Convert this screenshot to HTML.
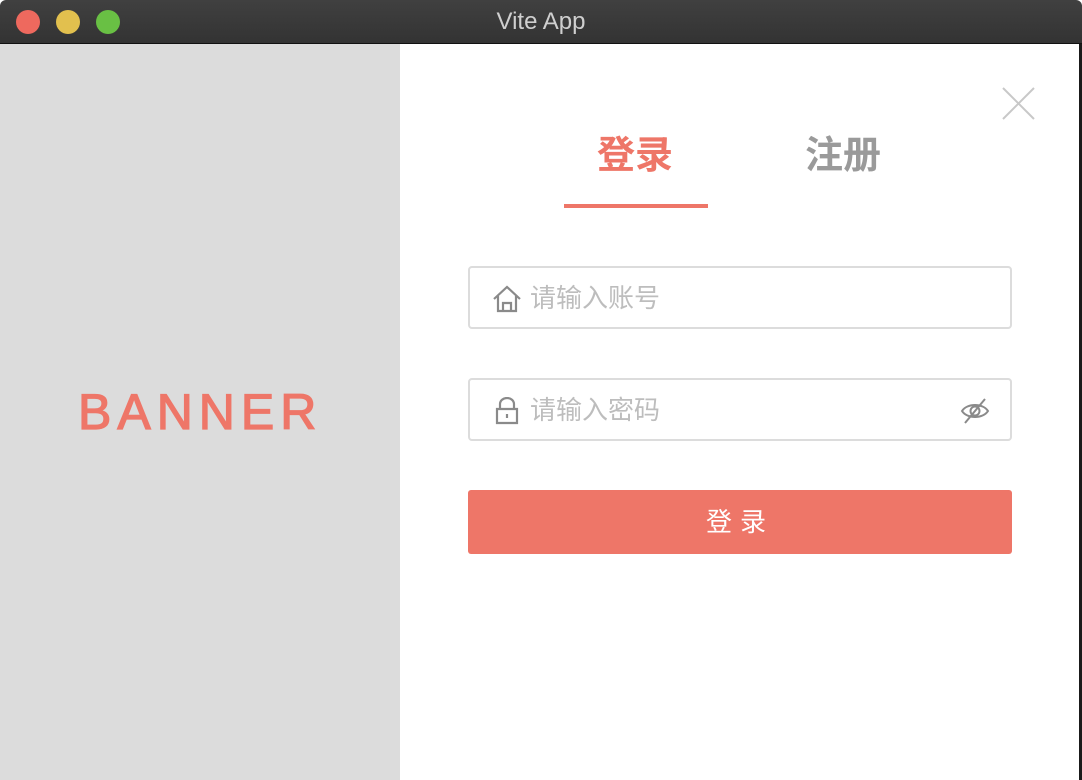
<!DOCTYPE html>
<html><head><meta charset="utf-8"><style>
*{margin:0;padding:0;box-sizing:border-box}
body{width:1082px;height:780px;background:#fff;font-family:"Liberation Sans","Noto Sans CJK SC",sans-serif;overflow:hidden;position:relative}
.title{position:absolute;left:0;top:0;width:1082px;height:44px;background:linear-gradient(#404040,#333);border-bottom:1px solid #111;border-radius:6px 6px 0 0}
.dot{position:absolute;top:10px;width:24px;height:24px;border-radius:50%}
.ttxt{position:absolute;left:0;right:0;top:8px;text-align:center;color:#cfcfcf;font-size:24px}
.left{position:absolute;left:0;top:44px;width:400px;height:736px;background:#dcdcdc}
.banner{position:absolute;left:78px;top:339px;font-size:50px;letter-spacing:6px;color:#ee7668;-webkit-text-stroke:1.3px #ee7668}
.edge{position:absolute;left:1079px;top:44px;width:3px;height:736px;background:#1a1a1a}
.tab{position:absolute;top:124px;font-size:38px;font-weight:bold}
.ul{position:absolute;left:564px;top:204px;width:144px;height:4px;background:#ee7668}
.inp{position:absolute;left:468px;width:544px;height:63px;border:2px solid #dcdcdc;border-radius:4px}
.ph{position:absolute;left:60px;top:10px;font-size:26px;color:#bdbdbd}
.btn{position:absolute;left:468px;top:490px;width:544px;height:64px;background:#ee7668;border-radius:3px;color:#fff;font-size:26px;text-align:center;line-height:64px;letter-spacing:8px}
</style></head><body>
<div class="title">
<div class="dot" style="left:16px;background:#ee695e"></div>
<div class="dot" style="left:56px;background:#e2c04e"></div>
<div class="dot" style="left:96px;background:#69c044"></div>
<div class="ttxt">Vite App</div>
</div>
<div class="left"><div class="banner">BANNER</div></div>
<div class="edge"></div>
<svg style="position:absolute;left:1002px;top:87px" width="33" height="33"><path d="M1 1L32 32M32 1L1 32" stroke="#c8c8c8" stroke-width="2"/></svg>
<div class="tab" style="left:597px;color:#ee7668">登录</div>
<div class="tab" style="left:805px;color:#9a9a9a">注册</div>
<div class="ul"></div>
<div class="inp" style="top:266px">
<svg style="position:absolute;left:22px;top:17px" width="30" height="28" viewBox="0 0 30 28"><path d="M2 14L15 2L28 14M6 11V26H24V11M11 26V18H19V26" fill="none" stroke="#8a8a8a" stroke-width="2.2"/></svg>
<div class="ph">请输入账号</div></div>
<div class="inp" style="top:378px">
<svg style="position:absolute;left:24px;top:17px" width="26" height="28" viewBox="0 0 26 28"><path d="M6 12V7a7 6 0 0 1 14 0v5M3 12H23V26H3Z M13 17V21" fill="none" stroke="#8a8a8a" stroke-width="2.2"/></svg>
<div class="ph">请输入密码</div>
<svg style="position:absolute;left:490px;top:18px" width="30" height="26" viewBox="0 0 30 26"><path d="M2 13C7 5 23 5 28 13C23 21 7 21 2 13Z" fill="none" stroke="#8a8a8a" stroke-width="2"/><circle cx="15" cy="13" r="4.5" fill="none" stroke="#8a8a8a" stroke-width="2"/><path d="M5 25L25 1" stroke="#8a8a8a" stroke-width="2"/></svg>
</div>
<div class="btn">登录</div>
</body></html>
